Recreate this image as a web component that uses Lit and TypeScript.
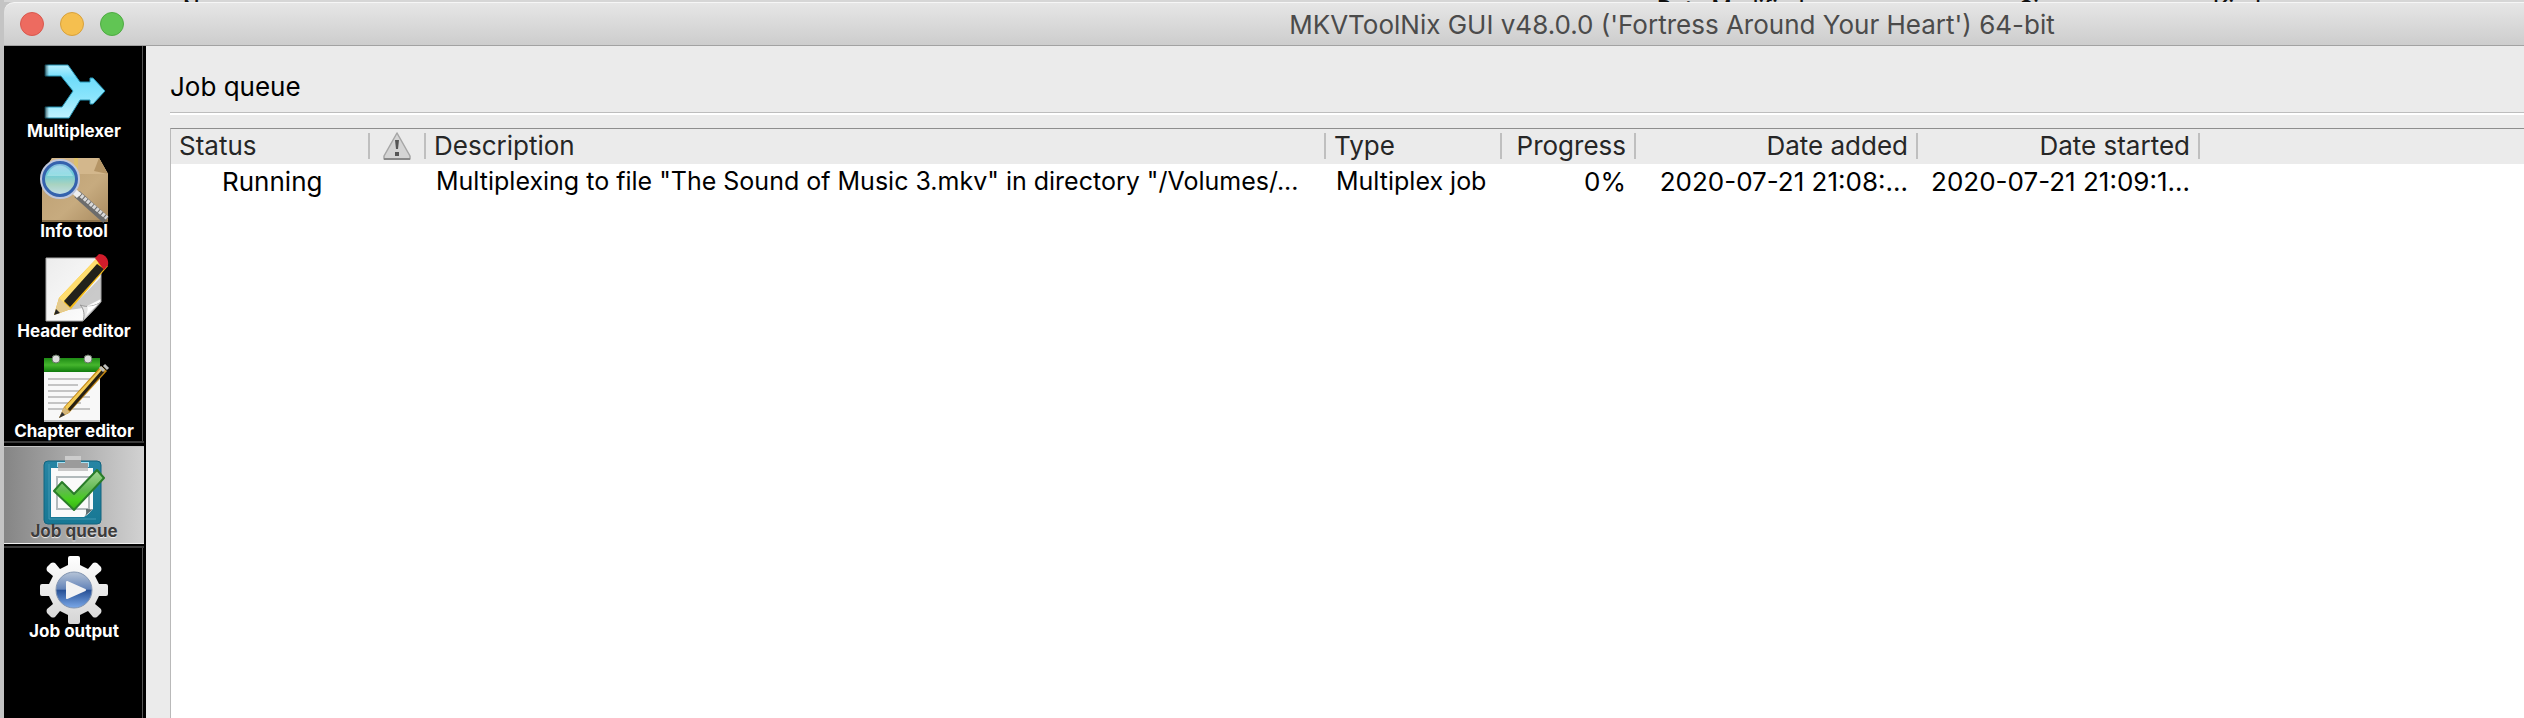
import { LitElement, html, css, svg } from "lit";
import { customElement, state } from "lit/decorators.js";

const icons: Record<string, unknown> = {
  multiplexer: svg`<defs><linearGradient id="m" x2="0" y2="1"><stop stop-color="#b8f0ff"/><stop offset=".25" stop-color="#6fdcfa"/><stop offset=".6" stop-color="#8ae5fc"/><stop offset="1" stop-color="#c0f2ff"/></linearGradient><linearGradient id="mf"><stop stop-color="#000" stop-opacity=".7"/><stop offset="1" stop-color="#000" stop-opacity="0"/></linearGradient></defs>
    <path d="M5 9h23l12 17h10v-4h3l12 13-12 13h-3v-4H40L29 62H5V51h17l11-16-12-15H5z" fill="url(#m)" stroke="#2593b3" stroke-width="1"/><path d="M4 8h5v13H4zM4 50h5v13H4z" fill="url(#mf)"/>`,
  info: svg`<defs><linearGradient id="b" x2="1" y2="1"><stop stop-color="#bb9d70"/><stop offset=".6" stop-color="#c7ab7f"/><stop offset="1" stop-color="#a98b60"/></linearGradient><linearGradient id="l" x2="0" y2="1"><stop stop-color="#91bde2"/><stop offset=".35" stop-color="#69cbd9"/><stop offset=".65" stop-color="#a8d3c0"/><stop offset="1" stop-color="#c7dff0"/></linearGradient></defs>
    <g transform="translate(2 2)"><path d="M10 0h47l9 16v47H0V16z" fill="url(#b)"/><path d="M10 0h47l9 16H0z" fill="#d3b78c"/><path d="M57 0l9 16-14-3z" fill="#b59566"/><path d="M32 0h4v16h-4z" fill="#ddc16c"/><path d="M0 62h66v2H0z" fill="#8d744e"/>
    <path d="M35 36L64 62" stroke="#6c6c6c" stroke-width="8"/><path d="M36 35L65 60" stroke="#d8d8d8" stroke-width="4" stroke-dasharray="3 1"/><path d="M32 33l5 5" stroke="#eee" stroke-width="6"/>
    <circle cx="18" cy="21" r="18" fill="url(#l)" stroke="#bfc7dc" stroke-width="4"/><circle cx="18" cy="21" r="16.500" fill="none" stroke="#3462ad" stroke-width="3"/><path d="M5 18c5-14 20-14 26 0z" fill="#eaffff" opacity=".35"/></g>`,
  header: svg`<defs><linearGradient id="p" x2="1" y2="1"><stop stop-color="#ececec"/><stop offset="1" stop-color="#fff"/></linearGradient></defs>
    <g transform="translate(1 -3)"><path d="M5 5h55v44L42 68H5z" fill="url(#p)" stroke="#aaa" stroke-width="1"/><path d="M60 24v22L42 55 28 57z" fill="#999" opacity=".5"/><path d="M42 68c2-5 1-13-3-16 8 3 15 1 21-3z" fill="#e4e4e4" stroke="#999" stroke-width="1"/><path d="M45 62c2-4 2-7 1-9 5 1 8-1 11-2z" fill="#fff"/>
    <path d="M13 62l5-17L57 4l10 9-37 43z" fill="#f5bb18"/><path d="M18 45L57 4l3 3-38 43z" fill="#ffdd6e"/><path d="M23 48L56 11l7 5-34 38z" fill="#23221b"/><path d="M13 62l5-17 12 11z" fill="#e4ca8e"/><path d="M13 62l2-6 4 4z" fill="#252525"/><path d="M54 5l4-4c7 0 10 6 9 11l-4 5z" fill="#d21c2b"/></g>`,
  chapter: svg`<defs><linearGradient id="g" x2="0" y2="1"><stop stop-color="#1e8b15"/><stop offset=".5" stop-color="#45b52d"/><stop offset="1" stop-color="#107b0d"/></linearGradient></defs>
    <g transform="translate(2 0)"><path d="M2 3h56v62H2z" fill="#f8f8f8"/><path d="M2 2h56v14H2z" fill="url(#g)"/><path d="M2 65h56" stroke="#bbb" stroke-width="2"/>
    <path d="M6 23h43M6 29h30M6 35h40M6 41h42M6 47h33M6 53h42" stroke="#c4c4c4" stroke-width="2"/><circle cx="14" cy="3" r="4" fill="#ddd" stroke="#657663"/><circle cx="46" cy="3" r="4" fill="#ddd" stroke="#657663"/>
    <path d="M17 62l5-11 37-41 6 5-38 42z" fill="#c28715"/><path d="M23 51l37-40 2 2-37 41z" fill="#f2cb57"/><path d="M27 54L61 15" stroke="#262014" stroke-width="3"/><path d="M17 62l5-11 6 5z" fill="#d5b77b"/><path d="M17 62l3-6 3 3z" fill="#333"/><path d="M58 11l4 4M62 9l4 4" stroke="#bfc0be" stroke-width="3"/></g>`,
  queue: svg`<defs><linearGradient id="q" x2="0" y2="1"><stop stop-color="#2685a4"/><stop offset="1" stop-color="#187894"/></linearGradient><linearGradient id="c" x2="0" y2="1"><stop stop-color="#a5d696"/><stop offset=".5" stop-color="#61b950"/><stop offset=".75" stop-color="#46cf1c"/><stop offset="1" stop-color="#35af12"/></linearGradient></defs>
    <g transform="translate(3 0)"><rect x="1" y="5" width="57" height="63" rx="4" fill="url(#q)" stroke="#12647f" stroke-width="1"/><path d="M6 8v55h47" fill="none" stroke="#4398b2"/><path d="M14 6h8v5h-8zM38 6h8v5h-8z" fill="#a5e2f5"/><path d="M8 12h42v41c-3 3-5 6-9 8H8z" fill="#fafafa"/><path d="M14 21h32v32H14z" fill="none" stroke="#b2babc" stroke-width="2"/><path d="M41 61c3-3 2-5 2-8 3 0 5 1 7 0z" fill="#5c6a6d"/>
    <path d="M15 7h7V1h16v6h7v8H15z" fill="#9b9b9b"/><path d="M22 0h16v4H22z" fill="#ccc"/><path d="M15 12h30v3H15z" fill="#c8c8c8"/></g>
    <path d="M14 35l8-9 12 12 23-24 7 8-30 32z" fill="url(#c)" stroke="#2a7d29" stroke-width="2" stroke-linejoin="round"/>`,
  output: svg`<defs><linearGradient id="o" x2="0" y2="1"><stop stop-color="#fff"/><stop offset="1" stop-color="#d5d5d5"/></linearGradient><linearGradient id="u" x2="0" y2="1"><stop stop-color="#b6c4d7"/><stop offset=".48" stop-color="#6383b8"/><stop offset=".5" stop-color="#264f94"/><stop offset="1" stop-color="#7ba9e9"/></linearGradient></defs>
    <path fill="url(#o)" d="M28 2q0-2 2-2h8q2 0 2 2v7l8 4 5-6q2-1 4 0l4 4q1 2 0 4l-6 5 4 8h7q2 0 2 2v8q0 2-2 2h-7l-4 8 6 5q1 2 0 4l-4 4q-2 1-4 0l-5-6-8 4v7q0 2-2 2h-8q-2 0-2-2v-7l-8-4-5 6q-2 1-4 0l-4-4q-1-2 0-4l6-5-4-8H2q-2 0-2-2v-8q0-2 2-2h7l4-8-6-5q-1-2 0-4l4-4q2-1 4 0l5 6 8-4z"/>
    <circle cx="34" cy="34" r="18" fill="url(#u)" stroke="#8295b1" stroke-width="1"/><path d="M27 26l18 8-18 8z" fill="#f3f3f3" stroke="#f3f3f3" stroke-width="2" stroke-linejoin="round"/>`,
};

const tools = [
  { id: "multiplexer", label: "Multiplexer" },
  { id: "info", label: "Info tool" },
  { id: "header", label: "Header editor" },
  { id: "chapter", label: "Chapter editor" },
  { id: "queue", label: "Job queue" },
  { id: "output", label: "Job output" },
];

const jobs = [
  {
    status: "Running",
    description: 'Multiplexing to file "The Sound of Music 3.mkv" in directory "/Volumes/...',
    type: "Multiplex job",
    progress: "0%",
    added: "2020-07-21 21:08:...",
    started: "2020-07-21 21:09:1...",
  },
];

@customElement("tool-bar")
class ToolBar extends LitElement {
  @state() selected = "queue";

  static styles = css`
    :host { display: block; width: 142px; flex: none; background: #000; }
    nav { height: 100%; display: flex; flex-direction: column; box-sizing: border-box; border-right: 1px solid #555; margin-right: 3px; }
    button {
      all: unset; box-sizing: border-box; height: 100px; flex: none; display: flex; flex-direction: column;
      align-items: center; justify-content: flex-end; padding: 0 0 8px 2px;
      color: #fff; font-weight: 700; font-size: 17px; line-height: 14px; white-space: nowrap;
    }
    button[aria-pressed="true"] {
      height: 98px; margin: 0 -2px 2px 0; padding: 0 0 5px;
      color: #3c3c3c; text-shadow: 0 1px 1px #eee;
      background: linear-gradient(90deg, #858585, #d2d2d2);
      border-top: 1px solid #c4c4c4; border-bottom: 1px solid #eee;
      box-shadow: 0 -3px 0 #000, 0 -5px 0 #3a3a3a, 0 2px 0 #000, 0 4px 0 #3a3a3a;
    }
    svg { width: 68px; height: 68px; overflow: visible; flex: none; }
  `;

  render() {
    return html`<nav aria-label="Tools">
      ${tools.map(
        (t) => html`<button aria-pressed=${t.id === this.selected} @click=${() => (this.selected = t.id)}>
          <svg viewBox="0 0 68 68" aria-hidden="true">${icons[t.id]}</svg>${t.label}
        </button>`,
      )}
    </nav>`;
  }
}

@customElement("job-table")
class JobTable extends LitElement {
  static styles = css`
    :host { display: block; border-top: 1px solid #8e8e8e; border-left: 1px solid #b9b9b9; background: #fff; overflow: hidden; }
    table { width: 100%; table-layout: fixed; border-collapse: collapse; font-size: 26px; line-height: 35px; }
    thead { background: #ebebeb; color: #262626; }
    th, td { box-sizing: border-box; height: 35px; padding: 0 10px; font-weight: 400; text-align: left; white-space: nowrap; overflow: hidden; }
    th { padding: 4px 0 5px 8px; vertical-align: top; }
    th span { display: block; height: 26px; padding-right: 8px; line-height: 26px; border-right: 2px solid #bfbfbf; }
    th:last-child span { border: 0; }
    th.warn { padding-left: 0; }
    th.warn span { display: flex; align-items: center; justify-content: center; padding: 0; }
    td { color: #000; }
    td:first-child { padding-left: 51px; }
    td.text { font-size: 25px; }
    .num { text-align: right; }
    .status { width: 199px; }
    .warn { width: 56px; }
    .desc { width: 900px; }
    .type { width: 176px; }
    .prog { width: 134px; }
    .added, .started { width: 282px; }
    svg { width: 28px; height: 28px; flex: none; }
  `;

  render() {
    return html`<table>
      <thead><tr>
        <th class="status"><span>Status</span></th>
        <th class="warn" aria-label="Warnings"><span><svg viewBox="0 0 28 28" aria-hidden="true">
          <path d="M14 1L27 24v3H1v-3z" fill="#d4d4d4" stroke="#a6a6a6" stroke-width="1.500" stroke-linejoin="round"/><path d="M1 27h26" stroke="#888" stroke-width="2"/><path d="M12 8h4l-1 9h-2zM12 20h4v4h-4z" fill="#555"/>
        </svg></span></th>
        <th class="desc"><span>Description</span></th>
        <th class="type"><span>Type</span></th>
        <th class="prog num"><span>Progress</span></th>
        <th class="added num"><span>Date added</span></th>
        <th class="started num"><span>Date started</span></th>
        <th></th>
      </tr></thead>
      <tbody>
        ${jobs.map(
          (j) => html`<tr>
            <td>${j.status}</td><td></td><td class="text">${j.description}</td><td class="text">${j.type}</td>
            <td class="num">${j.progress}</td><td class="num">${j.added}</td><td class="num">${j.started}</td><td></td>
          </tr>`,
        )}
      </tbody>
    </table>`;
  }
}

@customElement("app-root")
class AppRoot extends LitElement {
  static styles = css`
    :host { display: flex; flex-direction: column; height: 100vh; box-sizing: border-box; padding-left: 4px; background: #c4c4c4; overflow: hidden; font-family: Inter, "Liberation Sans", sans-serif; }
    .behind {
      flex: none; height: 2px; overflow: hidden; display: grid; grid-template-columns: 179fr 1474fr 362fr 194fr 311fr; align-items: end;
      background: #d6d6d6; color: #111; font-size: 22px; line-height: 16px; font-weight: 500; white-space: nowrap;
    }
    header {
      flex: none; height: 44px; box-sizing: border-box; display: grid; grid-template-columns: 51% 1fr; align-items: center;
      background: linear-gradient(#e6e6e6, #cdcdcd); border-top: 1px solid #f6f6f6; border-bottom: 1px solid #a2a2a2; border-top-left-radius: 10px;
    }
    .lights { display: flex; gap: 16px; padding-left: 16px; }
    .light { all: unset; box-sizing: border-box; width: 24px; height: 24px; border-radius: 50%; border: 1px solid; }
    .close { background: #ed6b60; border-color: #d9584e; }
    .min { background: #f5bf4f; border-color: #d8a13c; }
    .max { background: #61c554; border-color: #4fab43; }
    h1 { margin: 0; padding-top: 2px; color: #4b4b4b; font-size: 26px; line-height: 32px; font-weight: 400; white-space: nowrap; }
    .body { flex: 1; min-height: 0; display: flex; background: #ebebeb; }
    main { flex: 1; min-width: 0; display: flex; flex-direction: column; padding-left: 24px; }
    h2 { margin: 0; padding: 24px 0 8px; font-size: 26px; line-height: 34px; font-weight: 400; color: #000; border-bottom: 1px solid #bdbdbd; }
    .gap { flex: none; height: 13px; border-top: 2px solid #fff; }
    job-table { flex: 1; }
  `;

  render() {
    return html`
      <div class="behind" aria-hidden="true">
        <span></span><span>Name</span><span>Date Modified</span><span>Size</span><span>Kind</span>
      </div>
      <header>
        <div class="lights">
          <button class="light close" aria-label="Close"></button>
          <button class="light min" aria-label="Minimise"></button>
          <button class="light max" aria-label="Zoom"></button>
        </div>
        <h1>MKVToolNix GUI v48.0.0 ('Fortress Around Your Heart') 64-bit</h1>
      </header>
      <div class="body">
        <tool-bar></tool-bar>
        <main>
          <h2>Job queue</h2>
          <div class="gap"></div>
          <job-table></job-table>
        </main>
      </div>
    `;
  }
}
